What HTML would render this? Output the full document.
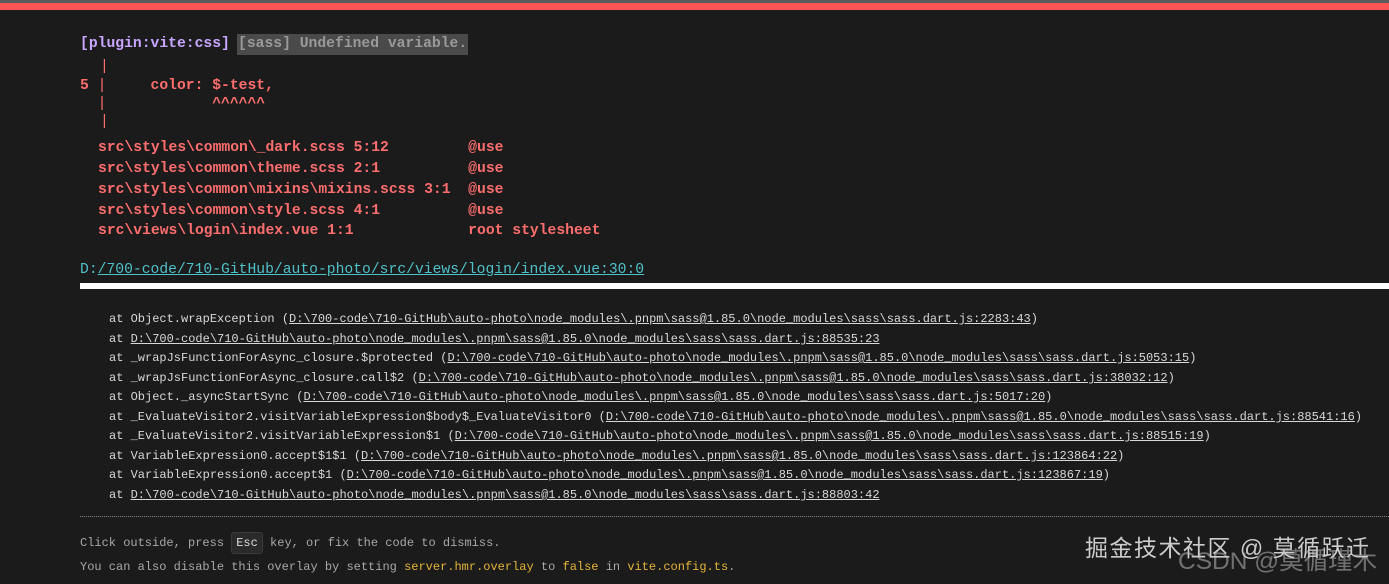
<!DOCTYPE html>
<html><head><meta charset="utf-8"><style>
html,body{margin:0;padding:0;width:1389px;height:584px;overflow:hidden;background:#1b1b1b;font-family:"Liberation Mono",monospace;}
.top{position:absolute;left:0;top:0;width:1389px;height:3px;background:#5c5c5c}
.red{position:absolute;left:0;top:3px;width:1389px;height:7px;background:#ff5555}
.t{position:absolute;white-space:pre;line-height:1}
.h{font-size:14.7px;font-weight:bold}
.r{color:#ff6e6e;font-weight:bold;font-size:14.7px}
.s{font-size:12px;color:#d8d8d8}
.s u{color:#d8d8d8}
.f{font-size:12px;color:#a8a8a8}
</style></head><body>
<div class="top"></div><div class="red"></div>
<div class="t h" style="left:80px;top:37px;color:#c9a6ff">[plugin:vite:css]</div>
<div class="t h" style="left:237px;top:34px;background:#4a4a4a;color:#9a9a9a;padding:3px 1px 3px 1px">[sass] Undefined variable.</div>
<div class="t r" style="left:100px;top:60px;font-weight:normal">|</div>
<div class="t r" style="left:80px;top:79px">5 <span style="font-weight:normal">|</span>     color: $-test,</div>
<div class="t r" style="left:80px;top:97px">  <span style="font-weight:normal">|</span>            ^^^^^^</div>
<div class="t r" style="left:100px;top:115px;font-weight:normal">|</div>
<div class="t r" style="left:98px;top:141px">src\styles\common\_dark.scss 5:12         @use</div>
<div class="t r" style="left:98px;top:162px">src\styles\common\theme.scss 2:1          @use</div>
<div class="t r" style="left:98px;top:183px">src\styles\common\mixins\mixins.scss 3:1  @use</div>
<div class="t r" style="left:98px;top:204px">src\styles\common\style.scss 4:1          @use</div>
<div class="t r" style="left:98px;top:224px">src\views\login\index.vue 1:1             root stylesheet</div>
<div class="t" style="left:80px;top:263px;font-size:14.7px;color:#4fc1c9">D:<u>/700-code/710-GitHub/auto-photo/src/views/login/index.vue:30:0</u></div>
<div style="position:absolute;left:80px;top:283px;width:1309px;height:6px;background:#fff"></div>
<div class="t s" style="left:109px;top:313px">at Object.wrapException (<u>D:\700-code\710-GitHub\auto-photo\node_modules\.pnpm\sass@1.85.0\node_modules\sass\sass.dart.js:2283:43</u>)</div>
<div class="t s" style="left:109px;top:333px">at <u>D:\700-code\710-GitHub\auto-photo\node_modules\.pnpm\sass@1.85.0\node_modules\sass\sass.dart.js:88535:23</u></div>
<div class="t s" style="left:109px;top:352px">at _wrapJsFunctionForAsync_closure.$protected (<u>D:\700-code\710-GitHub\auto-photo\node_modules\.pnpm\sass@1.85.0\node_modules\sass\sass.dart.js:5053:15</u>)</div>
<div class="t s" style="left:109px;top:372px">at _wrapJsFunctionForAsync_closure.call$2 (<u>D:\700-code\710-GitHub\auto-photo\node_modules\.pnpm\sass@1.85.0\node_modules\sass\sass.dart.js:38032:12</u>)</div>
<div class="t s" style="left:109px;top:391px">at Object._asyncStartSync (<u>D:\700-code\710-GitHub\auto-photo\node_modules\.pnpm\sass@1.85.0\node_modules\sass\sass.dart.js:5017:20</u>)</div>
<div class="t s" style="left:109px;top:411px">at _EvaluateVisitor2.visitVariableExpression$body$_EvaluateVisitor0 (<u>D:\700-code\710-GitHub\auto-photo\node_modules\.pnpm\sass@1.85.0\node_modules\sass\sass.dart.js:88541:16</u>)</div>
<div class="t s" style="left:109px;top:430px">at _EvaluateVisitor2.visitVariableExpression$1 (<u>D:\700-code\710-GitHub\auto-photo\node_modules\.pnpm\sass@1.85.0\node_modules\sass\sass.dart.js:88515:19</u>)</div>
<div class="t s" style="left:109px;top:450px">at VariableExpression0.accept$1$1 (<u>D:\700-code\710-GitHub\auto-photo\node_modules\.pnpm\sass@1.85.0\node_modules\sass\sass.dart.js:123864:22</u>)</div>
<div class="t s" style="left:109px;top:469px">at VariableExpression0.accept$1 (<u>D:\700-code\710-GitHub\auto-photo\node_modules\.pnpm\sass@1.85.0\node_modules\sass\sass.dart.js:123867:19</u>)</div>
<div class="t s" style="left:109px;top:489px">at <u>D:\700-code\710-GitHub\auto-photo\node_modules\.pnpm\sass@1.85.0\node_modules\sass\sass.dart.js:88803:42</u></div>
<div style="position:absolute;left:80px;top:516px;width:1309px;border-top:1px dotted #888"></div>
<div class="t f" style="left:80px;top:537px">Click outside, press <span style="display:inline-block;background:#2a2a2a;border:1px solid #3a3a3a;border-radius:3px;color:#ddd;padding:4px 4px;margin:-5px 0">Esc</span> key, or fix the code to dismiss.</div>
<div class="t f" style="left:80px;top:561px">You can also disable this overlay by setting <span style="color:#e5b53a">server.hmr.overlay</span> to <span style="color:#e5b53a">false</span> in <span style="color:#e5b53a">vite.config.ts</span>.</div>
<div class="t" style="left:1085px;top:537px;font-size:23px;letter-spacing:1.5px;color:rgba(235,235,235,0.85);font-family:'Liberation Sans','Noto Sans CJK SC',sans-serif">掘金技术社区 @ 莫循跃迁</div>
<div class="t" style="left:1178px;top:550px;font-size:24.5px;color:rgba(200,200,200,0.5);font-family:'Liberation Sans','Noto Sans CJK SC',sans-serif">CSDN @莫循瑾木</div>
</body></html>
